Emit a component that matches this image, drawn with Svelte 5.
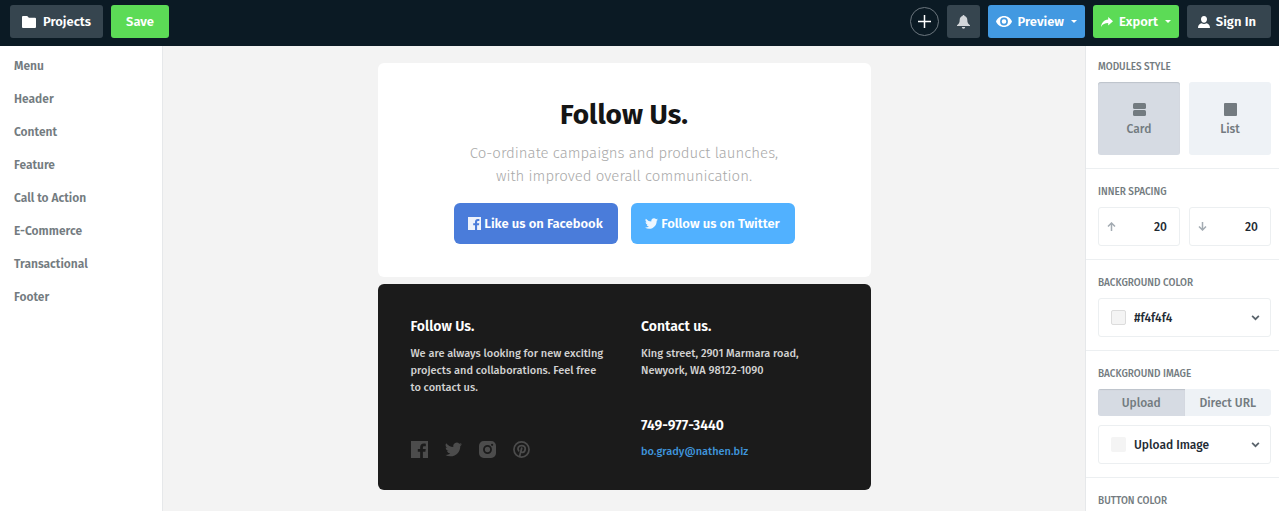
<script>
  const modules = ['Menu', 'Header', 'Content', 'Feature', 'Call to Action', 'E-Commerce', 'Transactional', 'Footer'];

  let moduleStyle = $state('Card');
  let imageSource = $state('Upload');
  let spacingTop = $state('20');
  let spacingBottom = $state('20');
</script>

{#snippet facebook()}
  <svg class="social" viewBox="0 0 18 18" aria-hidden="true">
    <path fill="currentColor" d="M0 0h18v18h-5.4v-6.7h2.6l.4-2.8h-3V7c0-1 .4-1.5 1.6-1.5h1.5V2.9c-.5-.1-1.2-.2-2.1-.2-2.5 0-3.9 1.5-3.9 3.9v1.9H7.2v2.8h2.5V18H0z" />
  </svg>
{/snippet}

{#snippet twitter()}
  <svg class="social" viewBox="0 0 24 24" aria-hidden="true">
    <path fill="currentColor" d="M24 4.6a10 10 0 0 1-2.8.8 5 5 0 0 0 2.1-2.7c-.9.5-2 1-3.1 1.2a4.9 4.9 0 0 0-8.4 4.5A14 14 0 0 1 1.7 3.15a4.9 4.9 0 0 0 1.5 6.6 5 5 0 0 1-2.2-.6v.05a4.9 4.9 0 0 0 3.95 4.8 5 5 0 0 1-2.2.1 4.9 4.9 0 0 0 4.6 3.4A9.9 9.9 0 0 1 0 19.5a14 14 0 0 0 7.55 2.2c9.05 0 14-7.5 14-14v-.6A10 10 0 0 0 24 4.6z" />
  </svg>
{/snippet}

{#snippet chevron()}
  <svg class="chevron" viewBox="0 0 8 6" aria-hidden="true">
    <path d="M1 1.5l3 3 3-3" />
  </svg>
{/snippet}

<div class="app">
  <header>
    <div class="group">
      <button class="btn projects">
        <svg width="14" height="12" viewBox="0 0 14 12" aria-hidden="true">
          <path fill="currentColor" d="M1 0h4.2l1.7 1.7H13a1 1 0 0 1 1 1V11a1 1 0 0 1-1 1H1a1 1 0 0 1-1-1V1a1 1 0 0 1 1-1z" />
        </svg>
        Projects
      </button>
      <button class="btn green save">Save</button>
    </div>
    <div class="group">
      <button class="add" aria-label="Add">
        <svg width="13" height="13" viewBox="0 0 13 13" aria-hidden="true">
          <path stroke="currentColor" stroke-width="1.5" d="M6.5 0v13M0 6.5h13" />
        </svg>
      </button>
      <button class="btn bell" aria-label="Notifications">
        <svg width="13" height="14" viewBox="0 0 13 14" aria-hidden="true">
          <path fill="currentColor" d="M6.5 0c.6 0 1 .4 1 .9 1.8.5 2.8 2 2.8 3.9 0 3.2 1 4.3 2.7 5.4V11H0v-.8c1.7-1.1 2.7-2.2 2.7-5.4 0-1.9 1-3.4 2.8-3.9 0-.5.4-.9 1-.9zM4.8 12h3.4a1.7 1.7 0 0 1-3.4 0z" />
        </svg>
      </button>
      <button class="btn blue">
        <svg width="16" height="11" viewBox="0 0 16 11" aria-hidden="true">
          <path fill="currentColor" fill-rule="evenodd" d="M8 0c3.6 0 6.6 2.2 8 5.5C14.6 8.8 11.6 11 8 11S1.4 8.8 0 5.5C1.4 2.2 4.4 0 8 0zm0 1.6a3.9 3.9 0 1 0 0 7.8 3.9 3.9 0 0 0 0-7.8zm0 1.6a2.3 2.3 0 1 1 0 4.6 2.3 2.3 0 0 1 0-4.6z" />
        </svg>
        Preview
        <span class="caret"></span>
      </button>
      <button class="btn green export">
        <svg width="12" height="10" viewBox="0 0 12 10" aria-hidden="true">
          <path fill="currentColor" d="M7.2 0L12 4.3 7.2 8.5V6.1C3.9 6.1 1.6 7.2 0 10c.5-3.8 2.6-7 7.2-7.5z" />
        </svg>
        Export
        <span class="caret"></span>
      </button>
      <button class="btn signin">
        <svg width="12" height="12" viewBox="0 0 12 12" aria-hidden="true">
          <path fill="currentColor" d="M6 0c1.9 0 3 1.4 3 3.2S7.8 6.7 6 6.7 3 5 3 3.2 4.1 0 6 0zM0 12c0-3 1.5-4.3 3.6-4.7.7.5 1.5.7 2.4.7s1.7-.2 2.4-.7C10.5 7.7 12 9 12 12z" />
        </svg>
        Sign In
      </button>
    </div>
  </header>

  <div class="body">
    <nav>
      {#each modules as name}
        <a href="#{name}">{name}</a>
      {/each}
    </nav>

    <main>
      <section class="follow">
        <h1>Follow Us.</h1>
        <p>Co-ordinate campaigns and product launches,<br />with improved overall communication.</p>
        <div class="actions">
          <a class="facebook" href="#facebook">{@render facebook()} Like us on Facebook</a>
          <a class="twitter" href="#twitter">{@render twitter()} Follow us on Twitter</a>
        </div>
      </section>

      <section class="contact">
        <div class="col">
          <div>
            <h2>Follow Us.</h2>
            <p>We are always looking for new exciting projects and collaborations. Feel free to contact us.</p>
          </div>
          <div class="socials">
            <a href="#facebook" aria-label="Facebook">{@render facebook()}</a>
            <a href="#twitter" aria-label="Twitter">{@render twitter()}</a>
            <a href="#instagram" aria-label="Instagram">
              <svg class="social" viewBox="0 0 18 18" aria-hidden="true">
                <path fill="currentColor" fill-rule="evenodd" d="M5 0h8a5 5 0 0 1 5 5v8a5 5 0 0 1-5 5H5a5 5 0 0 1-5-5V5a5 5 0 0 1 5-5zm4 4.3a4.7 4.7 0 1 0 0 9.4 4.7 4.7 0 0 0 0-9.4zm0 1.9a2.8 2.8 0 1 1 0 5.6 2.8 2.8 0 0 1 0-5.6zm4.9-3.3a1.2 1.2 0 1 0 0 2.4 1.2 1.2 0 0 0 0-2.4z" />
              </svg>
            </a>
            <a href="#pinterest" aria-label="Pinterest">
              <svg class="social" viewBox="0 0 18 18" aria-hidden="true">
                <circle cx="9" cy="9" r="8" fill="none" stroke="currentColor" stroke-width="1.8" />
                <path fill="none" stroke="currentColor" stroke-width="1.9" stroke-linecap="round" d="M6 10.3C4.3 7.8 5.8 4.9 9.2 4.9c2.5 0 4 1.5 3.7 3.8-.3 2.2-1.5 3.5-3 3.3-.9-.1-1.4-.7-1.5-1.3M9.2 7.6L7 16.3" />
              </svg>
            </a>
          </div>
        </div>
        <div class="col">
          <div>
            <h2>Contact us.</h2>
            <p>King street, 2901 Marmara road,<br />Newyork, WA 98122-1090</p>
          </div>
          <div>
            <h2>749-977-3440</h2>
            <a class="mail" href="mailto:bo.grady@nathen.biz">bo.grady@nathen.biz</a>
          </div>
        </div>
      </section>
    </main>

    <aside>
      <section>
        <h3>MODULES STYLE</h3>
        <div class="pair">
          <button class="tile" class:active={moduleStyle == 'Card'} onclick={() => (moduleStyle = 'Card')}>
            <svg width="13" height="13" viewBox="0 0 13 13" aria-hidden="true">
              <rect width="13" height="6" rx="1.5" fill="currentColor" />
              <rect y="7" width="13" height="6" rx="1.5" fill="currentColor" />
            </svg>
            Card
          </button>
          <button class="tile" class:active={moduleStyle == 'List'} onclick={() => (moduleStyle = 'List')}>
            <svg width="13" height="13" viewBox="0 0 13 13" aria-hidden="true">
              <rect width="13" height="13" rx="1" fill="currentColor" />
            </svg>
            List
          </button>
        </div>
      </section>

      <section>
        <h3>INNER SPACING</h3>
        <div class="pair">
          <label class="field">
            <svg class="arrow" viewBox="0 0 9 9" aria-hidden="true"><path d="M4.5 9V1M1 4.5L4.5 1 8 4.5" /></svg>
            <input type="text" aria-label="Top spacing" bind:value={spacingTop} />
          </label>
          <label class="field">
            <svg class="arrow" viewBox="0 0 9 9" aria-hidden="true"><path d="M4.5 0v8M1 4.5L4.5 8 8 4.5" /></svg>
            <input type="text" aria-label="Bottom spacing" bind:value={spacingBottom} />
          </label>
        </div>
      </section>

      <section>
        <h3>BACKGROUND COLOR</h3>
        <label class="field">
          <span class="swatch outlined"></span>
          <select aria-label="Background color"><option>#f4f4f4</option></select>
          {@render chevron()}
        </label>
      </section>

      <section>
        <h3>BACKGROUND IMAGE</h3>
        <div class="toggle">
          {#each ['Upload', 'Direct URL'] as source}
            <button class:active={imageSource == source} onclick={() => (imageSource = source)}>{source}</button>
          {/each}
        </div>
        <label class="field">
          <span class="swatch"></span>
          <select aria-label="Background image"><option>Upload Image</option></select>
          {@render chevron()}
        </label>
      </section>

      <section>
        <h3>BUTTON COLOR</h3>
      </section>
    </aside>
  </div>
</div>

<style>
  :global(body) {
    margin: 0;
  }

  .app {
    display: flex;
    flex-direction: column;
    height: 100vh;
    overflow: hidden;
    font-family: 'Fira Sans', 'Noto Sans', sans-serif;
    font-size: 12px;
    font-weight: 500;
    color: #737b80;
    background: #f3f3f3;
  }

  button, input, select {
    font: inherit;
    color: inherit;
    border: none;
    margin: 0;
    padding: 0;
    background: none;
  }

  button {
    cursor: pointer;
  }

  a {
    color: inherit;
    text-decoration: none;
  }

  h1, h2, h3, p {
    margin: 0;
  }

  header {
    display: flex;
    flex: none;
    justify-content: space-between;
    padding: 5px 8px 8px 10px;
    background: #0b1a24;
  }

  .group {
    display: flex;
    align-items: center;
    gap: 8px;
  }

  .btn {
    display: flex;
    align-items: center;
    justify-content: center;
    gap: 6px;
    height: 33px;
    padding: 0 8px;
    border-radius: 3px;
    background: #36454f;
    color: #fff;
    font-size: 13px;
    font-weight: 600;
    white-space: nowrap;
  }

  .green {
    background: #5cdb56;
  }

  .blue {
    background: #4299e1;
  }

  .projects {
    gap: 7px;
    padding: 0 12px;
  }

  .save {
    padding: 0 15px;
  }

  .signin {
    padding: 0 15px 0 11px;
  }

  .bell {
    width: 33px;
    padding: 0;
    color: #d3d6da;
  }

  .add {
    display: flex;
    align-items: center;
    justify-content: center;
    width: 29px;
    height: 29px;
    border: 1px solid #6c767e;
    border-radius: 50%;
    color: #fff;
  }

  .caret {
    margin-left: 1px;
    border: 3px solid transparent;
    border-top-color: currentColor;
    border-bottom: none;
  }

  .body {
    display: flex;
    flex: 1;
    min-height: 0;
  }

  nav {
    flex: none;
    box-sizing: border-box;
    width: 163px;
    padding-top: 4px;
    border-right: 1px solid #e6e8ea;
    background: #fff;
  }

  nav a {
    display: block;
    padding-left: 14px;
    font-weight: 600;
    line-height: 33px;
  }

  main {
    flex: 1;
    padding: 17px 16px;
  }

  main section {
    box-sizing: border-box;
    max-width: 493px;
    margin: 0 auto 7px;
    padding: 33px;
    border-radius: 6px;
  }

  .follow {
    background: #fff;
    text-align: center;
  }

  h1 {
    color: #151515;
    font-size: 28px;
    font-weight: 700;
    line-height: 38px;
  }

  .follow p {
    margin: 8px 0 15px;
    color: #a9a9a9;
    font-size: 15px;
    font-weight: 300;
    line-height: 23px;
  }

  .actions {
    display: flex;
    justify-content: center;
    gap: 13px;
  }

  .actions a {
    display: flex;
    align-items: center;
    justify-content: center;
    gap: 3px;
    width: 164px;
    height: 41px;
    border-radius: 6px;
    color: #fff;
    font-size: 13px;
    font-weight: 600;
  }

  .actions .social {
    width: 13px;
    height: 13px;
    opacity: 0.9;
  }

  .facebook {
    background: #4a7cda;
  }

  .twitter {
    background: #51b1ff;
  }

  main .contact {
    display: flex;
    gap: 34px;
    min-height: 206px;
    padding-bottom: 30px;
    background: #1b1b1b;
  }

  .col {
    display: flex;
    flex: 1;
    flex-direction: column;
    justify-content: space-between;
  }

  h2 {
    margin-bottom: 8px;
    color: #fff;
    font-size: 14px;
    font-weight: 600;
    line-height: 20px;
  }

  .contact p {
    color: #d2d2d2;
    font-size: 11px;
    line-height: 17px;
  }

  .socials {
    display: flex;
    gap: 17px;
    padding-bottom: 2px;
    color: #4c4c4c;
  }

  .social {
    display: block;
    width: 17px;
    height: 17px;
  }

  .mail {
    display: block;
    color: #3f95dc;
    font-size: 11px;
    line-height: 16px;
  }

  aside {
    flex: none;
    box-sizing: border-box;
    width: 194px;
    overflow: hidden;
    border-left: 1px solid #e6e8ea;
    background: #fff;
  }

  aside section {
    padding: 15px 8px 13px 12px;
    border-bottom: 1px solid #eceff1;
  }

  aside section:first-child {
    padding-top: 13px;
  }

  h3 {
    margin-bottom: 7px;
    font-size: 10px;
    font-weight: 500;
    line-height: 16px;
  }

  .pair {
    display: flex;
    gap: 9px;
  }

  .tile {
    display: flex;
    flex: 1;
    flex-direction: column;
    align-items: center;
    justify-content: center;
    gap: 6px;
    height: 73px;
    padding-top: 2px;
    border-radius: 3px;
    background: #eef2f6;
  }

  .active.active {
    background: #d6dbe3;
    box-shadow: inset 0 1px 1px #bdc3ca;
  }

  .field {
    display: flex;
    box-sizing: border-box;
    flex: 1;
    align-items: center;
    min-width: 0;
    height: 39px;
    padding: 0 10px 0 12px;
    border: 1px solid #eceff1;
    border-radius: 3px;
    color: #1e2a33;
  }

  .pair .field {
    padding: 0 12px 0 8px;
  }

  .field input {
    flex: 1;
    min-width: 0;
    text-align: right;
  }

  .field select {
    flex: 1;
    min-width: 0;
    margin: 0 8px;
    appearance: none;
  }

  .arrow, .chevron {
    flex: none;
    width: 9px;
    height: 9px;
    fill: none;
    stroke: #a3abb2;
    stroke-width: 1.5;
  }

  .chevron {
    height: 7px;
    stroke: #59636b;
  }

  .swatch {
    box-sizing: border-box;
    width: 15px;
    height: 15px;
    border-radius: 2px;
    background: #f4f4f4;
  }

  .outlined {
    border: 1px solid #dcdcdc;
  }

  .toggle {
    display: flex;
    margin-bottom: 9px;
    overflow: hidden;
    border-radius: 3px;
    background: #eef2f6;
  }

  .toggle button {
    flex: 1;
    height: 27px;
  }
</style>
